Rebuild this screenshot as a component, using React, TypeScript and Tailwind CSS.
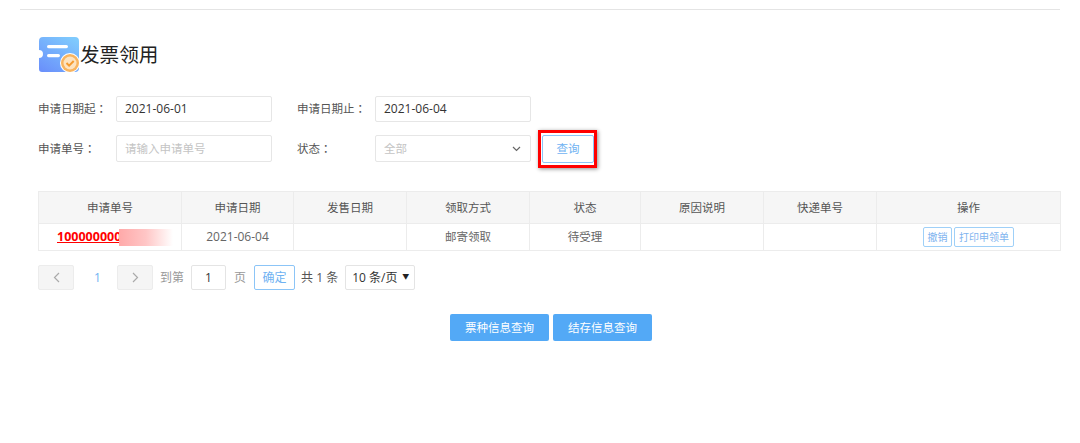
const font = "font-['Open_Sans','Noto_Sans_CJK_SC',sans-serif]";

const columns = [
  { title: '申请单号', width: 'w-[143px]' },
  { title: '申请日期', width: 'w-[112px]' },
  { title: '发售日期', width: 'w-[113px]' },
  { title: '领取方式', width: 'w-[123px]' },
  { title: '状态', width: 'w-[111px]' },
  { title: '原因说明', width: 'w-[123px]' },
  { title: '快递单号', width: 'w-[113px]' },
  { title: '操作', width: 'w-[184px]' },
];

function TicketIcon() {
  return (
    <svg width="41" height="36" viewBox="0 0 41 36" className="shrink-0">
      <defs>
        <linearGradient id="ticket" x1="0.8" y1="0" x2="0.1" y2="1">
          <stop offset="0" stopColor="#7fcafd" />
          <stop offset="1" stopColor="#6a90fb" />
        </linearGradient>
      </defs>
      <path
        d="M4 0h32a4 4 0 0 1 4 4v27a4 4 0 0 1-4 4H3a3 3 0 0 1-3-3V21a4 4 0 0 0 0-8V4a4 4 0 0 1 4-4z"
        fill="url(#ticket)"
      />
      <rect x="8" y="8" width="21" height="3.2" rx="1.6" fill="#fff" />
      <rect x="8" y="17" width="13" height="3.2" rx="1.6" fill="#fff" />
      <circle cx="31" cy="26" r="10" fill="#fff" />
      <circle cx="31" cy="26" r="9" fill="#f9b45f" />
      <circle cx="31" cy="26" r="6.5" fill="#fde3c0" />
      <path d="M27.5 26l2.6 2.6 4.6-4.6" fill="none" stroke="#f59a2f" strokeWidth="2" />
    </svg>
  );
}

function Colon() {
  return <span className="font-['Noto_Sans_CJK_TC',sans-serif]">：</span>;
}

function Field({ label, children }: { label: string; children: React.ReactNode }) {
  return (
    <div className="flex items-center">
      <span className="w-[78px] text-[11.5px] text-[#555]">
        {label}
        <Colon />
      </span>
      {children}
    </div>
  );
}

function Chevron({ dir }: { dir: 'l' | 'r' }) {
  return (
    <svg width="7" height="11" viewBox="0 0 7 11" fill="none" stroke="#aaa" strokeWidth="1.2">
      <path d={dir === 'l' ? 'M6 1L1.5 5.5 6 10' : 'M1 1l4.5 4.5L1 10'} />
    </svg>
  );
}

export default function App() {
  return (
    <div className={`${font} w-[1080px] h-[443px] bg-white overflow-hidden pt-[9px]`}>
      <div className="mx-5 w-[1040px] h-px bg-[#e4e4e4]" />

      <div className="ml-[39px] mt-[27px] flex items-center h-[36px]">
        <TicketIcon />
        <h1 className="mb-[1px] text-[19.6px] font-normal text-[#222] leading-none">发票领用</h1>
      </div>

      <div className="ml-[38px] mt-[23px] flex flex-col gap-[13px]">
        <div className="flex">
          <Field label="申请日期起">
            <div className="w-[156px] h-[26px] border border-[#e6e6e6] rounded-[2px] pl-[8px] flex items-center text-[12px] text-[#333]">
              2021-06-01
            </div>
          </Field>
          <div className="ml-[25px]">
            <Field label="申请日期止">
              <div className="w-[156px] h-[26px] border border-[#e6e6e6] rounded-[2px] pl-[8px] flex items-center text-[12px] text-[#333]">
                2021-06-04
              </div>
            </Field>
          </div>
        </div>
        <div className="flex items-start">
          <Field label="申请单号">
            <div className="w-[156px] h-[27px] border border-[#e6e6e6] rounded-[2px] pl-[8px] flex items-center text-[11.5px] text-[#c4c4c4]">
              请输入申请单号
            </div>
          </Field>
          <div className="ml-[25px]">
            <Field label="状态">
              <div className="w-[156px] h-[27px] border border-[#e6e6e6] rounded-[2px] pl-[8px] pr-[9px] flex items-center justify-between text-[11.5px] text-[#c4c4c4]">
                全部
                <svg width="9" height="6" viewBox="0 0 9 6" fill="none" stroke="#666" strokeWidth="1.2">
                  <path d="M1 1l3.5 3.5L8 1" />
                </svg>
              </div>
            </Field>
          </div>
          <div className="relative ml-[11px] w-[52px] h-[28px] border border-[#8cc5f7] rounded-[2px] flex items-center justify-center text-[11.5px] text-[#6fb2f2]">
            查询
            <div className="absolute left-[-5px] top-[-6px] w-[59px] h-[38px] border-[3px] border-[#ff0000] shadow-[1px_1px_4px_rgba(0,0,0,0.45)]" />
          </div>
        </div>
      </div>

      <table className="ml-[38px] mt-[28px] w-[1022px] table-fixed border-collapse text-[11.5px]">
        <thead>
          <tr className="h-[32px] bg-[#f6f6f6]">
            {columns.map((c) => (
              <th key={c.title} className={`${c.width} border border-[#ececec] font-normal text-[#555]`}>
                {c.title}
              </th>
            ))}
          </tr>
        </thead>
        <tbody>
          <tr className="h-[27px] text-center text-[#666]">
            <td className="border border-[#ececec] text-left pl-[18px]">
              <div className="flex items-center">
                <span className="font-bold text-[#ff0000] underline text-[12.5px]">100000000</span>
                <span className="-ml-[2px] w-[54px] h-[17px] bg-gradient-to-r from-[#ffa9a9] via-[#ffc6c6] to-white" />
              </div>
            </td>
            <td className="border border-[#ececec] text-[12px]">2021-06-04</td>
            <td className="border border-[#ececec]" />
            <td className="border border-[#ececec]">邮寄领取</td>
            <td className="border border-[#ececec]">待受理</td>
            <td className="border border-[#ececec]" />
            <td className="border border-[#ececec]" />
            <td className="border border-[#ececec]">
              <div className="flex justify-center gap-[2px] text-[10px] text-[#7fb4ef]">
                <span className="w-[29px] h-[20px] border border-[#9fd0f8] rounded-[2px] flex items-center justify-center">撤销</span>
                <span className="w-[60px] h-[20px] border border-[#9fd0f8] rounded-[2px] flex items-center justify-center">打印申领单</span>
              </div>
            </td>
          </tr>
        </tbody>
      </table>

      <div className="ml-[38px] mt-[14px] flex items-center h-[25px] text-[12px] text-[#999]">
        <span className="w-[36px] h-[25px] bg-[#f5f5f5] border border-[#ececec] rounded-[2px] flex items-center justify-center">
          <Chevron dir="l" />
        </span>
        <span className="w-[43px] pl-[4px] text-center text-[#6fb2f2]">1</span>
        <span className="w-[36px] h-[25px] bg-[#f5f5f5] border border-[#ececec] rounded-[2px] flex items-center justify-center">
          <Chevron dir="r" />
        </span>
        <span className="ml-[7px]">到第</span>
        <span className="ml-[7px] w-[35px] h-[25px] border border-[#e4e4e4] rounded-[2px] flex items-center justify-center text-[#333]">1</span>
        <span className="ml-[8px]">页</span>
        <span className="ml-[8px] w-[41px] h-[25px] border border-[#8cc5f7] rounded-[2px] flex items-center justify-center text-[#6fb2f2]">确定</span>
        <span className="ml-[6px] text-[#555]">共 1 条</span>
        <span className="ml-[7px] w-[70px] h-[25px] border border-[#e4e4e4] rounded-[2px] flex items-center justify-between pl-[6px] pr-[5px] text-[#333]">
          10 条/页
          <span className="text-[7px] text-[#222]">▼</span>
        </span>
      </div>

      <div className="ml-[450px] mt-[24px] flex gap-[4px]">
        <button className="w-[99px] h-[27px] bg-[#53a9f6] rounded-[2px] text-[11.5px] text-white">票种信息查询</button>
        <button className="w-[99px] h-[27px] bg-[#53a9f6] rounded-[2px] text-[11.5px] text-white">结存信息查询</button>
      </div>
    </div>
  );
}
